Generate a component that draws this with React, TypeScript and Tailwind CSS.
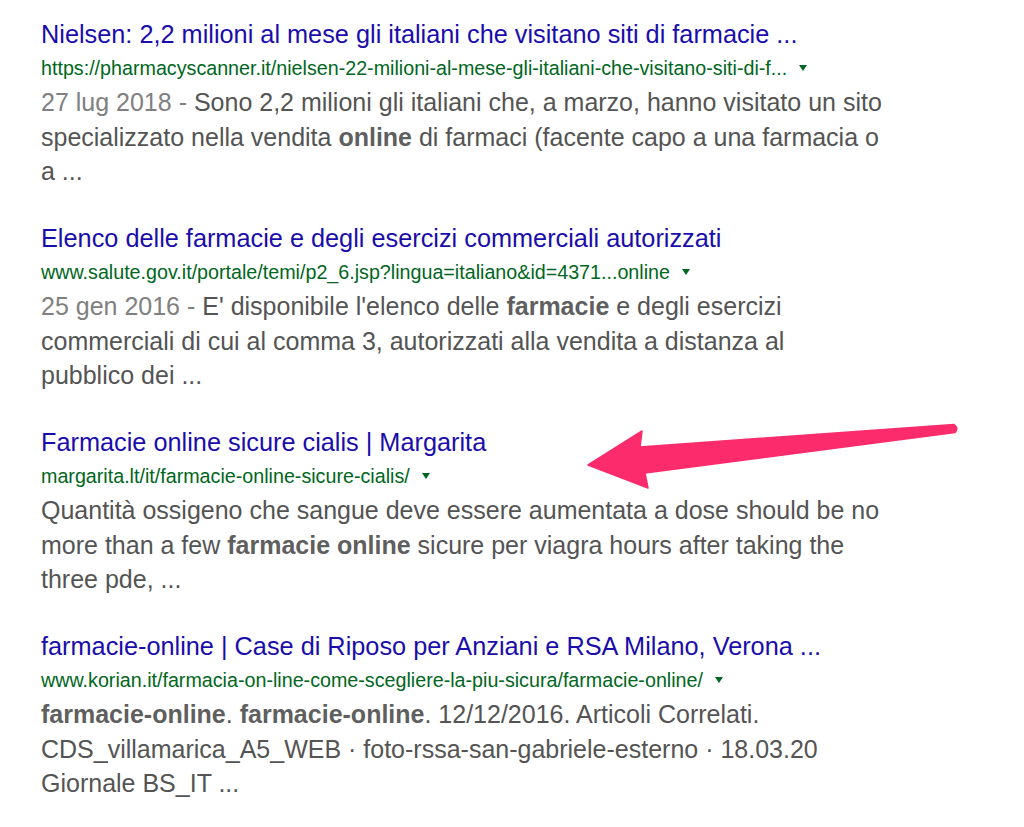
import React from "react"

type Result = {
    title: string
    url: string
    date?: string
    lines: React.ReactNode[]
}

const results: Result[] = [
    {
        title: "Nielsen: 2,2 milioni al mese gli italiani che visitano siti di farmacie ...",
        url: "https://pharmacyscanner.it/nielsen-22-milioni-al-mese-gli-italiani-che-visitano-siti-di-f...",
        date: "27 lug 2018",
        lines: [
            <>Sono 2,2 milioni gli italiani che, a marzo, hanno visitato un sito</>,
            <>specializzato nella vendita <b className="font-bold text-[#5f5f5f]">online</b> di farmaci (facente capo a una farmacia o</>,
            <>a ...</>,
        ],
    },
    {
        title: "Elenco delle farmacie e degli esercizi commerciali autorizzati",
        url: "www.salute.gov.it/portale/temi/p2_6.jsp?lingua=italiano&id=4371...online",
        date: "25 gen 2016",
        lines: [
            <>E' disponibile l'elenco delle <b className="font-bold text-[#5f5f5f]">farmacie</b> e degli esercizi</>,
            <>commerciali di cui al comma 3, autorizzati alla vendita a distanza al</>,
            <>pubblico dei ...</>,
        ],
    },
    {
        title: "Farmacie online sicure cialis | Margarita",
        url: "margarita.lt/it/farmacie-online-sicure-cialis/",
        lines: [
            <>Quantità ossigeno che sangue deve essere aumentata a dose should be no</>,
            <>more than a few <b className="font-bold text-[#5f5f5f]">farmacie online</b> sicure per viagra hours after taking the</>,
            <>three pde, ...</>,
        ],
    },
    {
        title: "farmacie-online | Case di Riposo per Anziani e RSA Milano, Verona ...",
        url: "www.korian.it/farmacia-on-line-come-scegliere-la-piu-sicura/farmacie-online/",
        lines: [
            <><b className="font-bold text-[#5f5f5f]">farmacie-online</b>. <b className="font-bold text-[#5f5f5f]">farmacie-online</b>. 12/12/2016. Articoli Correlati.</>,
            <>CDS_villamarica_A5_WEB · foto-rssa-san-gabriele-esterno · 18.03.20</>,
            <>Giornale BS_IT ...</>,
        ],
    },
]

function Arrow() {
    return (
        <svg
            className="absolute left-0 top-0 pointer-events-none"
            width="1024"
            height="827"
            viewBox="0 0 1024 827"
        >
            <path
                d="M588 465 L642 431 L640 447 L954 424.5 Q959 428 955 432.5 L645 473 L648 488 Z"
                fill="#fc2b6b"
                stroke="#fc2b6b"
                strokeWidth="1.5"
                strokeLinejoin="round"
            />
        </svg>
    )
}

export default function App() {
    return (
        <div className="relative w-[1024px] h-[827px] bg-white overflow-hidden font-['Liberation_Sans',Arial,sans-serif]">
            <div className="flex flex-col gap-[32.5px] pl-[41px] pt-[17px]">
                {results.map((r, i) => (
                    <div key={i} className="flex flex-col">
                        <div className="text-[25.3px] leading-[34px] text-[#1a0dab] whitespace-nowrap">{r.title}</div>
                        <div className="flex items-center text-[19.7px] leading-[34px] text-[#006621] whitespace-nowrap">
                            {r.url}
                            <span className="ml-[12px] inline-block w-0 h-0 border-l-[4.5px] border-r-[4.5px] border-t-[6px] border-l-transparent border-r-transparent border-t-[#006621]" />
                        </div>
                        <div className="text-[25px] leading-[34.5px] text-[#545454] whitespace-nowrap">
                            {r.lines.map((line, j) => (
                                <div key={j}>
                                    {j === 0 && r.date && <span className="text-[#808080]">{r.date} - </span>}
                                    {line}
                                </div>
                            ))}
                        </div>
                    </div>
                ))}
            </div>
            <Arrow />
        </div>
    )
}
